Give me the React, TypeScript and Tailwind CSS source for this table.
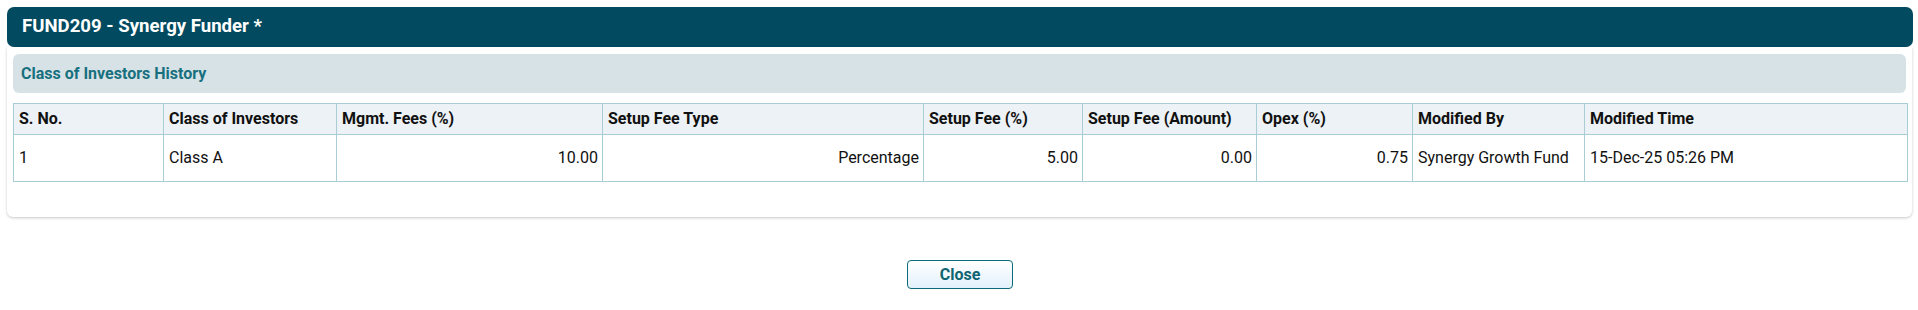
import * as React from "react";

const cols = [
  { label: "S. No.", w: "w-[150px]" },
  { label: "Class of Investors", w: "w-[173px]" },
  { label: "Mgmt. Fees (%)", w: "w-[266px]" },
  { label: "Setup Fee Type", w: "w-[321px]" },
  { label: "Setup Fee (%)", w: "w-[159px]" },
  { label: "Setup Fee (Amount)", w: "w-[174px]" },
  { label: "Opex (%)", w: "w-[156px]" },
  { label: "Modified By", w: "w-[172px]" },
  { label: "Modified Time", w: "w-[323px]" },
];

const rows = [
  [
    { v: "1" },
    { v: "Class A" },
    { v: "10.00", r: true },
    { v: "Percentage", r: true },
    { v: "5.00", r: true },
    { v: "0.00", r: true },
    { v: "0.75", r: true },
    { v: "Synergy Growth Fund" },
    { v: "15-Dec-25 05:26 PM" },
  ],
];

export default function App() {
  return (
    <main className="min-h-screen bg-white font-['Roboto',sans-serif] pt-[7px] pl-[7px] pr-[5px]">
      <div className="h-[40px] bg-[#024a60] rounded-[7px] px-[15px] flex items-center">
        <h1 className="text-white font-bold text-[18.6px]">FUND209 - Synergy Funder *</h1>
      </div>

      <div className="bg-white mr-px rounded-b-[6px] shadow-[0_1px_3px_rgba(0,0,0,0.22)] pt-[7px] px-[6px] pb-[35px]">
        <div className="h-[39px] bg-[#d7e2e7] rounded-[6px] px-[8px] flex items-center">
          <h2 className="text-[#17707e] font-bold text-[16px]">Class of Investors History</h2>
        </div>

        <table className="mt-[10px] w-full table-fixed border-collapse text-[16px] text-[#111]">
          <colgroup>
            {cols.map((c) => (
              <col key={c.label} className={c.w} />
            ))}
          </colgroup>
          <thead>
            <tr className="h-[31px] bg-[#ecf2f5]">
              {cols.map((c) => (
                <th key={c.label} className="border border-[#a9cdd4] px-[5px] text-left font-bold">
                  {c.label}
                </th>
              ))}
            </tr>
          </thead>
          <tbody>
            {rows.map((row, i) => (
              <tr key={i} className="h-[47px]">
                {row.map((cell, j) => (
                  <td
                    key={j}
                    className={
                      cell.r
                        ? "border border-[#a9cdd4] px-[4px] text-right"
                        : "border border-[#a9cdd4] px-[5px] text-left"
                    }
                  >
                    {cell.v}
                  </td>
                ))}
              </tr>
            ))}
          </tbody>
        </table>
      </div>

      <div className="flex justify-center mt-[43px]">
        <button className="w-[106px] h-[29px] border border-[#0b6b78] rounded-[4px] bg-gradient-to-b from-white to-[#e3f1fb] text-[#0e6472] font-bold text-[16px]">
          Close
        </button>
      </div>
    </main>
  );
}
